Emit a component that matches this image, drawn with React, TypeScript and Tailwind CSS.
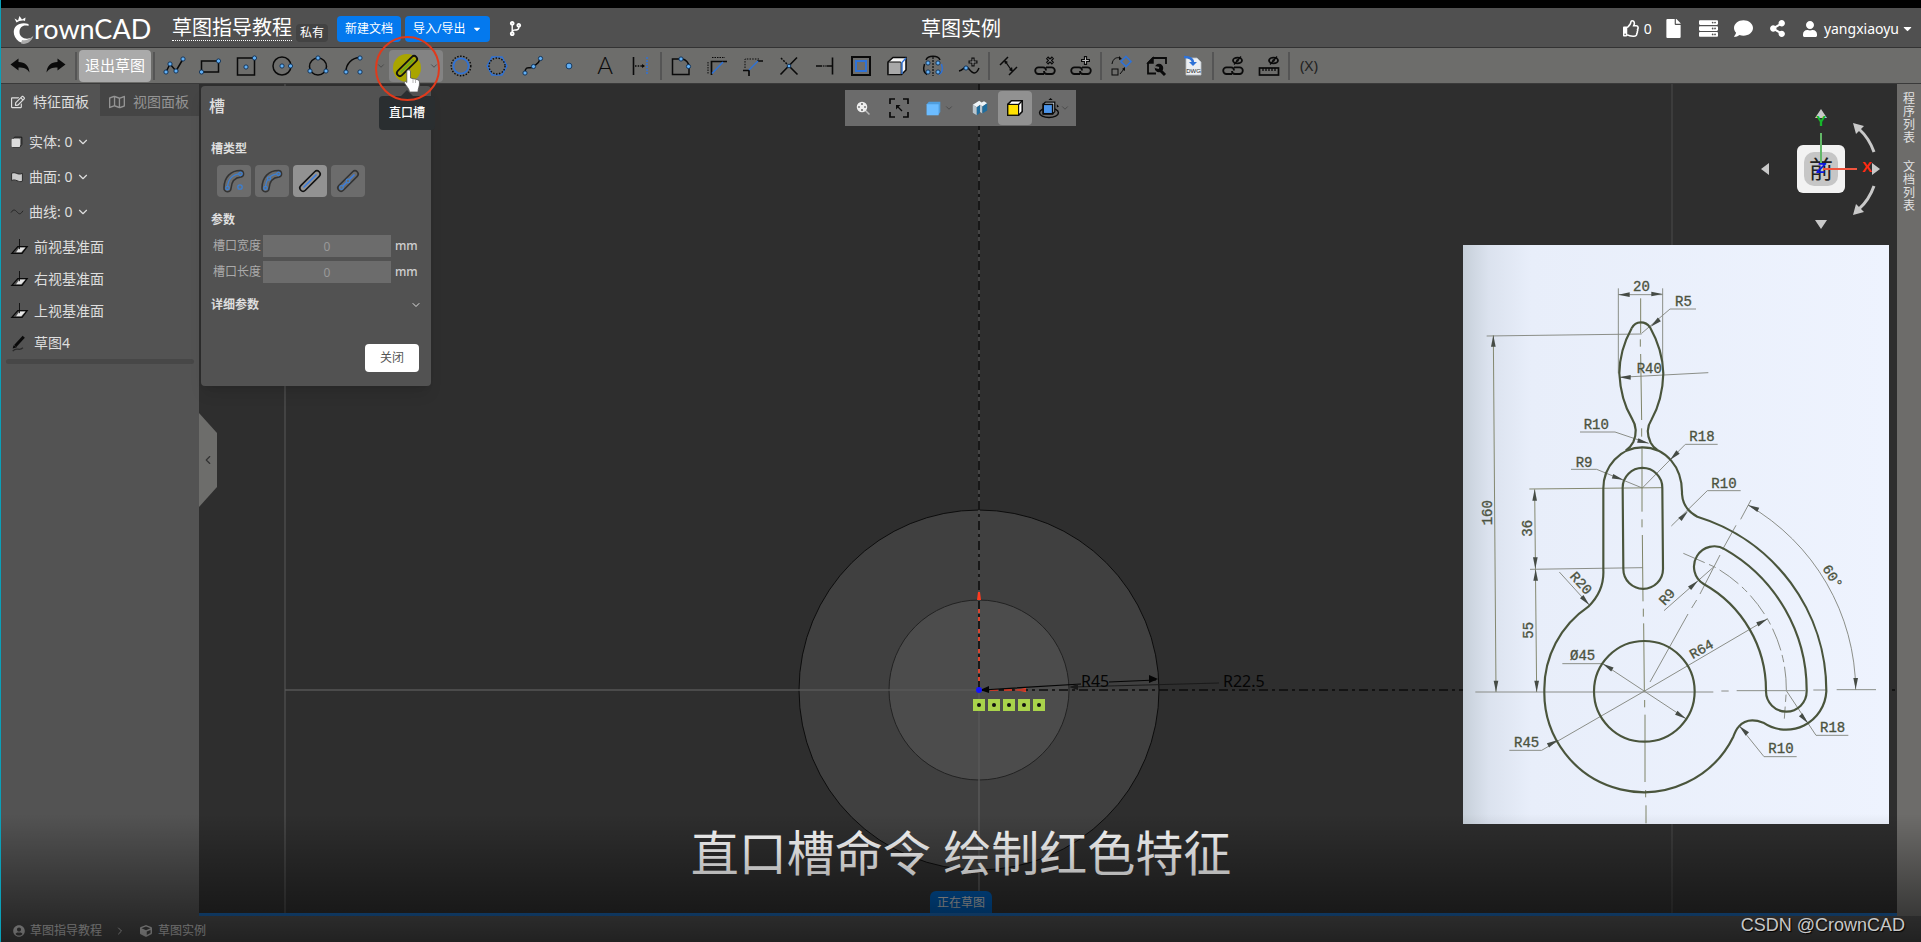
import type { ReactNode } from 'react';
import {
  FaCaretDown,
  FaCodeBranch,
  FaComment,
  FaCube,
  FaFile,
  FaRegEdit,
  FaRegMap,
  FaRegThumbsUp,
  FaServer,
  FaShareAlt,
  FaUser,
  FaUserCircle,
} from 'react-icons/fa';
import { ChevronDown, ChevronLeft, ChevronRight } from 'lucide-react';

const BLUE = '#2f72d6';

function Dot({ x, y, r = 2.1 }: { x: number; y: number; r?: number }) {
  return <circle cx={x} cy={y} r={r} fill="#62b0f5" stroke="#0d2f55" strokeWidth="0.9" />;
}

function Icon({ children, size = 20 }: { children: ReactNode; size?: number }) {
  return (
    <svg width={size} height={size} viewBox="0 0 20 20" fill="none" stroke="#0a0a0a" strokeWidth="1.5" className="shrink-0 overflow-visible" aria-hidden="true">
      {children}
    </svg>
  );
}

function StraightSlot({ dots = false }: { dots?: boolean }) {
  return (
    <>
      <rect x="-3" y="6.8" width="26" height="6.4" rx="3.2" transform="rotate(-45 10 10)" />
      <path d="M3.500 16.500 L16.500 3.500" stroke="#3b7de0" strokeWidth="1.6" />
      {dots && (
        <g fill="#6c6c6c" stroke="#3d7fd0" strokeWidth="1.2">
          <circle cx="3.500" cy="16.500" r="1.8" />
          <circle cx="10" cy="10" r="1.8" />
        </g>
      )}
    </>
  );
}

function ArcSlot({ middle = false }: { middle?: boolean }) {
  return (
    <>
      <path d="M0 17 C0 6 7 -0.500 16.500 -0.500 A3.300 3.300 0 0 1 17 6 C11 6.500 7.500 10 7 17.500 A3.500 3.500 0 0 1 0 17 Z" />
      <path d="M3.500 17 C3.500 8 9 3 16.500 2.800" stroke="#3d7fd0" strokeWidth="1.3" />
      <g fill="#6c6c6c" stroke="#3d7fd0" strokeWidth="1.300">
        <circle cx="3.500" cy="17" r="1.7" />
        <circle cx="16.500" cy="2.800" r="1.7" />
        {middle ? <circle cx="7" cy="7.500" r="1.7" /> : <circle cx="16" cy="16" r="2.200" />}
      </g>
    </>
  );
}

function ChainLinks() {
  return (
    <g strokeWidth="1.8">
      <path d="M9 18 H3.500 a3.300 3.300 0 0 1 0 -6.600 H8 a3 3 0 0 1 3 3" />
      <path d="M11 11.400 H16.500 a3.300 3.300 0 0 1 0 6.600 H12 a3 3 0 0 1 -3 -3" />
    </g>
  );
}

type Tool = { name: string; art: ReactNode };

const drawTools: Tool[] = [
  { name: '直线', art: <><path d="M2 16 L6 8 L12 15 L19 3" /><Dot x={2} y={16} /><Dot x={6} y={8} /><Dot x={12} y={15} /><Dot x={19} y={3} /></> },
  { name: '矩形', art: <><rect x="1.500" y="5" width="17" height="11" /><Dot x={18.500} y={5} /><Dot x={1.500} y={16} /></> },
  { name: '中心矩形', art: <><rect x="1.5" y="2" width="17" height="17" /><Dot x={10} y={11} /><Dot x={18.500} y={2} /></> },
  { name: '圆', art: <><circle cx="10" cy="10" r="9" /><Dot x={10} y={10} /><Dot x={18.500} y={10} /></> },
  { name: '三点圆', art: <><circle cx="10" cy="10.500" r="8.500" /><Dot x={10} y={2} /><Dot x={2} y={15} /><Dot x={18} y={15} /></> },
  { name: '圆弧', art: <><path d="M2 16 A14 14 0 0 1 16 1.500" /><Dot x={2} y={16} /><Dot x={16} y={2} /><Dot x={16} y={16} /></> },
];

const shapeTools: Tool[] = [
  { name: '内切圆', art: <><circle cx="10" cy="10" r="9.800" strokeDasharray="1.500 1.500" strokeWidth="1.400" /><circle cx="10" cy="10" r="7.600" stroke={BLUE} strokeWidth="1.8" /></> },
  { name: '多边形', art: <><path d="M5 1 H15 L19.800 10 L15 19 H5 L0.200 10 Z" stroke={BLUE} strokeWidth="1.6" /><circle cx="10" cy="10" r="8" strokeDasharray="1.500 1.500" strokeWidth="1.400" /></> },
  { name: '样条', art: <><path d="M2 17 C2 8 8 14 10.500 10.500 C13 8 15 9 17.500 2.500" /><Dot x={2} y={17} /><Dot x={10.500} y={10.500} /><Dot x={17.500} y={2.500} /></> },
  { name: '点', art: <Dot x={10} y={10} r={2.900} /> },
  { name: '文字', art: <text x="10" y="18" textAnchor="middle" fontSize="24" fontFamily="Lato" fontWeight="300" fill="#0a0a0a" stroke="none">A</text> },
  { name: '延伸', art: <><path d="M2.500 1 V19" strokeWidth="1.6" /><path d="M4 10 H13" strokeDasharray="1.500 1.200" /><path d="M11 8 L14 10 L11 12 Z" fill="#0a0a0a" stroke="none" /><path d="M16 1 V19" stroke={BLUE} strokeDasharray="2 1" strokeWidth="1.5" /></> },
];

const editTools: Tool[] = [
  { name: '圆角', art: <><path d="M1.500 3 H11 A8 8 0 0 1 18 10.500 V18.500 H1.500 Z" /><Dot x={10} y={3} /><Dot x={17.500} y={10.500} /></> },
  { name: '等距', art: <><path d="M4.500 19 V5.500 H20" strokeWidth="1.700" /><path d="M5 17.500 L16 6" stroke={BLUE} /><path d="M1 6 V18 M5 1.500 H18" strokeDasharray="1.500 1" strokeWidth="1" /></> },
  { name: '倒角', art: <><path d="M0 14.500 H6 V20 M14 5 H20" strokeWidth="1.700" /><path d="M6 14 L15 5" stroke={BLUE} /><path d="M2 12 V3 H16" strokeDasharray="1.500 1.200" strokeWidth="1" /></> },
  { name: '修剪', art: <><path d="M18 1.500 L1.500 18.500 M11 11 L18.500 18.500" strokeWidth="1.600" /><path d="M2 2 L9 9" strokeDasharray="2 1.200" /><Dot x={10} y={10} r={1.800} /></> },
  { name: '延长', art: <><path d="M17.500 1.500 V18.500 M12 10 H17.500 M1 10 H6" strokeWidth="1.600" /><path d="M6 10 H12" strokeDasharray="1.200 1" /></> },
  { name: '偏移', art: <><rect x="1" y="1" width="18" height="18" strokeWidth="2" /><rect x="5" y="5" width="10" height="10" stroke={BLUE} strokeWidth="2" /></> },
  { name: '投影', art: <><path d="M1 6 L6 1.500 H19 V14 L14.500 18.500 H1 Z" fill="#f5f5f5" /><rect x="1.200" y="6" width="13" height="12.500" rx="1" fill="#a8a8a8" strokeWidth="1" /><path d="M15 18 V6.500 L19 2" stroke={BLUE} strokeWidth="1.400" /></> },
  { name: '镜像', art: <><path d="M3 4 C5 -1 15 -1 17 4" /><path d="M10 1 V20" strokeDasharray="2 1" strokeWidth="1.200" /><path d="M1.500 8 C0 13 1 17 4 18.500" /><path d="M18.500 8 C20 13 19 17 16 18.500" stroke={BLUE} /><Dot x={5} y={7} /><Dot x={15} y={7} /><Dot x={5} y={16} /><Dot x={15} y={16} /></> },
  { name: '添加点', art: <><path d="M0 15 C5 14 6 8 10 13 S17 19 20 12" /><path d="M14 1.500 V10.500 M9.500 6 H18.500" strokeWidth="3.200" /><path d="M14 2.700 V9.300 M10.700 6 H17.300" stroke="#999" strokeWidth="1" /><Dot x={7} y={12} /></> },
];

const constraintTools: Tool[] = [
  { name: '约束', art: <><path d="M1 9 L9 1 M10 19 L18 11" /><path d="M6 5 L13 15" strokeWidth="1.300" /><path d="M5 4 L9 6 L6 8 Z M14 16 L13 11 L10 14 Z" fill="#0a0a0a" stroke="none" /></> },
  { name: '删除约束', art: <><ChainLinks /><path d="M12 1.500 L18 7.500 M18 1.500 L12 7.500" strokeWidth="3.200" /><path d="M12.800 2.300 L17.200 6.700 M17.200 2.300 L12.800 6.700" stroke="#aaa" strokeWidth="0.900" /></> },
  { name: '添加约束', art: <><ChainLinks /><path d="M14.500 0 V9 M10 4.500 H19" strokeWidth="3.200" /><path d="M14.500 1.200 V7.800 M11.200 4.500 H17.800" stroke="#bbb" strokeWidth="1.100" /></> },
];

const transferTools: Tool[] = [
  { name: '移动', art: <><rect x="1" y="13" width="6" height="6" strokeWidth="1" /><path d="M1 8 C2 2 6 1 9 2 M9 18 L13 13" strokeWidth="1" /><path d="M8 0 L11 3 L8 4 Z M14 11 L14 15 L11 13 Z" fill="#0a0a0a" stroke="none" /><path d="M15 0.500 L20 5.500 L15 10.500 L10 5.500 Z" stroke={BLUE} strokeWidth="1.600" /></> },
  { name: '块设置', art: <><path d="M9 17.500 H1 V7 L6 2 H19 V8" strokeWidth="1.800" /><path d="M1 7 L6 2 V7 Z" fill="#0a0a0a" /><path d="M18 19 L12 13" strokeWidth="3" /><circle cx="12" cy="12" r="3.500" fill="#0a0a0a" /><path d="M8 11 L12 12" stroke="#6d6d6b" strokeWidth="2" /></> },
  { name: '导入DWG', art: <><path d="M3 2 H14 L18 6 V19 H3 Z" fill="#eceff2" stroke="#b9c0c8" strokeWidth="0.800" /><path d="M1 1 C7 1 10 3 10 7" stroke={BLUE} strokeWidth="2.500" /><path d="M6 6 H14 L10 10 Z" fill={BLUE} stroke="none" /><text x="10.500" y="17" textAnchor="middle" fontSize="6" fontFamily="Liberation Sans" fill="#222" stroke="none">DWG</text></> },
];

const displayTools: Tool[] = [
  { name: '隐藏约束', art: <><ChainLinks /><ellipse cx="14.500" cy="4.500" rx="4.500" ry="2.800" strokeWidth="1.800" /><circle cx="14.500" cy="4.500" r="1.200" fill="#0a0a0a" stroke="none" /><path d="M11 8.500 L18 0.500" strokeWidth="1.300" /></> },
  { name: '隐藏尺寸', art: <><rect x="0.500" y="12" width="19" height="7" strokeWidth="1.700" /><path d="M4 12 V15 M7 12 V15 M10 12 V15 M13 12 V15 M16 12 V15" strokeWidth="1.300" /><ellipse cx="14.500" cy="4.500" rx="4.500" ry="2.800" strokeWidth="1.800" /><circle cx="14.500" cy="4.500" r="1.200" fill="#0a0a0a" stroke="none" /><path d="M11 8.500 L18 0.500" strokeWidth="1.300" /></> },
];

function ToolGroup({ tools }: { tools: Tool[] }) {
  return (
    <>
      {tools.map((tool) => (
        <button key={tool.name} type="button" aria-label={tool.name} className="flex h-8 w-9 shrink-0 items-center justify-center">
          <Icon>{tool.art}</Icon>
        </button>
      ))}
    </>
  );
}

function Divider() {
  return <span className="mx-px h-7 w-0.5 shrink-0 bg-[#555]" />;
}

function Logo() {
  return (
    <a href="#" className="flex w-[130px] items-end text-white" aria-label="CrownCAD">
      <svg width="21" height="30" viewBox="0 0 21 30" className="shrink-0" aria-hidden="true">
        <path d="M3.500 7.500 L1.500 3.500 L5 5.500 L6.500 1 L9 4.500 L12.500 2.500 L12 6 C9 5 6 6 3.500 7.500 Z" fill="#fff" />
        <path d="M15.500 9 C4 6 -2 14 2 22 C6 30 16 29.500 20 22 C13 26 6.500 22.500 6.500 17 C6.500 12.500 10 9.500 15.500 11 Z" fill="#fff" />
        <path d="M9 25 C13 26 17 24 20.500 20.500 C18.500 27 13 30 8 28.500 Z" fill="#aaa" />
      </svg>
      <span className="font-[Lato] text-[27px] leading-8">rownCAD</span>
    </a>
  );
}

function Header() {
  return (
    <header className="grid h-10 grid-cols-[1fr_auto_1fr] items-center border-b border-[#333] bg-[#505050] pt-0.5 text-white">
      <div className="flex items-center pl-3">
        <Logo />
        <h1 className="ml-[29px] border-b border-dotted border-white text-xl leading-6 whitespace-nowrap">草图指导教程</h1>
        <span className="mt-2 ml-1 rounded bg-[#434343] px-1 text-xs leading-[18px] whitespace-nowrap">私有</span>
        <button type="button" className="ml-[9px] h-[26px] rounded-sm bg-[#0479ee] px-2 text-xs whitespace-nowrap">新建文档</button>
        <button type="button" className="ml-1 flex h-[26px] items-center gap-1.5 rounded-sm bg-[#0479ee] px-2 text-xs whitespace-nowrap">
          导入/导出 <FaCaretDown size={10} />
        </button>
        <button type="button" aria-label="分支" className="ml-[18px]"><FaCodeBranch size={15} /></button>
      </div>
      <h2 className="text-xl leading-6">草图实例</h2>
      <div className="flex items-center justify-end pr-[7px]">
        <button type="button" className="flex items-center gap-1 text-sm"><FaRegThumbsUp size={17} />0</button>
        <button type="button" aria-label="文件" className="ml-3"><FaFile size={19} /></button>
        <button type="button" aria-label="列表" className="ml-4"><FaServer size={19} /></button>
        <button type="button" aria-label="消息" className="ml-4"><FaComment size={19} /></button>
        <button type="button" aria-label="分享" className="ml-4"><FaShareAlt size={17} /></button>
        <button type="button" className="ml-4 flex items-center text-sm">
          <FaUser size={16} className="mr-1.5" />yangxiaoyu<FaCaretDown size={13} className="ml-0.5" />
        </button>
      </div>
    </header>
  );
}

function SlotTool() {
  return (
    <div className="relative flex h-8 w-[54px] shrink-0 items-center rounded-sm bg-[#838383]">
      <button type="button" aria-label="直口槽" className="relative flex h-8 w-9 items-center justify-center">
        <span className="absolute top-1 left-1 size-7 rounded-full bg-[#a9a500]" />
        <svg width="20" height="20" viewBox="0 0 20 20" fill="none" stroke="#111" strokeWidth="1.8" className="relative overflow-visible" aria-hidden="true">
          <rect x="-3" y="7" width="26" height="6" rx="3" transform="rotate(-45 10 10)" />
          <path d="M3.500 16.500 L16.500 3.500" stroke="#6aa81c" strokeWidth="2" />
        </svg>
      </button>
      <button type="button" aria-label="更多槽" className="flex w-[18px] justify-center text-[#444]"><ChevronDown size={10} /></button>

      {/* Hover tooltip */}
      <span className="absolute top-10 left-3 z-20 border-x-6 border-b-6 border-x-transparent border-b-[#2a2e30]" />
      <span role="tooltip" className="absolute top-[46px] -left-2.5 z-20 rounded bg-[#2a2e30] px-2.5 py-2 text-xs leading-[18px] font-medium whitespace-nowrap text-white">
        直口槽
      </span>

      {/* Click marker and pointer */}
      <span className="absolute -top-3.5 -left-3.5 z-30 size-[65px] rounded-full border-2 border-[#e03a1c]" />
      <svg width="18" height="24" viewBox="0 0 18 24" className="absolute top-[19px] left-3.5 z-30" aria-hidden="true">
        <path d="M5 1 C6.800 0.500 7.500 1.500 7.500 3 V9 L14 10.500 C16 11 16.500 12 16.500 14 C16.500 18 15 19 15 23 H6.500 C6 19 3 17 1.500 14 C1 12.500 2.500 12 3.800 13.500 V3 C3.800 2 4 1.300 5 1 Z" fill="#fff" stroke="#555" strokeWidth="0.800" />
        <path d="M10 10 V14 M12.500 11 V14" stroke="#999" strokeWidth="0.700" />
      </svg>
    </div>
  );
}

function HistoryArrow({ flip = false }: { flip?: boolean }) {
  return (
    <svg width="20" height="16" viewBox="0 0 20 16" className={flip ? '-scale-x-100' : ''} aria-hidden="true">
      <path d="M0.500 6.500 L8.500 0.500 V4 C15 4 19 8 19.500 14.500 C17 10.500 14 9.500 8.500 9.500 V12.500 Z" fill="#0a0a0a" />
    </svg>
  );
}

function Toolbar() {
  return (
    <div role="toolbar" className="flex h-9 items-center border-b border-[#3a3a3a] bg-[#6d6d6b] pl-px text-[#0a0a0a]">
      <button type="button" aria-label="撤销" className="flex h-8 w-9 shrink-0 items-center justify-center"><HistoryArrow /></button>
      <button type="button" aria-label="重做" className="flex h-8 w-9 shrink-0 items-center justify-center"><HistoryArrow flip /></button>
      <Divider />
      <button type="button" className="mx-px h-8 w-[72px] shrink-0 rounded-sm bg-[#aaa] text-[15px] text-white">退出草图</button>
      <Divider />
      <ToolGroup tools={drawTools} />
      <button type="button" aria-label="更多圆弧" className="flex w-[17px] justify-center text-[#444]"><ChevronDown size={10} /></button>
      <SlotTool />
      <ToolGroup tools={shapeTools} />
      <Divider />
      <ToolGroup tools={editTools} />
      <Divider />
      <ToolGroup tools={constraintTools} />
      <Divider />
      <ToolGroup tools={transferTools} />
      <Divider />
      <ToolGroup tools={displayTools} />
      <Divider />
      <button type="button" className="h-8 w-9 shrink-0 text-[15px] text-[#222]">(X)</button>
    </div>
  );
}

const counts = [
  { label: '实体', art: <><path d="M3 5 L6 2 H18 V14 L15 18 H3 Z" fill="#777" strokeWidth="1.500" /><rect x="1" y="4.500" width="14" height="14" rx="2" fill="#ddd" stroke="none" /></> },
  { label: '曲面', art: <path d="M1 4 C7 0 11 8 19 4 V17 C12 20 8 12 1 16 Z" fill="#ccc" stroke="#222" /> },
  { label: '曲线', art: <path d="M0 11 C5 3 8 8 11 11 S16 14 20 8" stroke="#222" /> },
];

const planes = ['前视基准面', '右视基准面', '上视基准面'];

function FeaturePanel() {
  return (
    <aside className="w-[198px] shrink-0 bg-[#535353] text-sm text-[#dedede]">
      <div role="tablist" className="flex h-8">
        <button type="button" role="tab" aria-selected="true" className="flex w-[99px] items-center gap-2 pt-1 pl-2.5 whitespace-nowrap">
          <FaRegEdit size={14} />特征面板
        </button>
        <button type="button" role="tab" aria-selected="false" className="flex flex-1 items-center gap-2 bg-[#454545] pt-1 pl-[9px] whitespace-nowrap text-[#949494]">
          <FaRegMap size={16} />视图面板
        </button>
      </div>
      <ul className="mt-2">
        {counts.map((item) => (
          <li key={item.label} className="flex h-[35px] items-center pl-2.5">
            <Icon size={12}>{item.art}</Icon>
            <button type="button" className="ml-1.5 flex items-center gap-1">
              {item.label}: 0 <ChevronDown size={14} />
            </button>
          </li>
        ))}
      </ul>
      <ul className="mt-0.5">
        {planes.map((plane) => (
          <li key={plane} className="flex h-8 items-center gap-1.5 pl-2.5">
            <Icon size={17}>
              <path d="M1 17 L8 9 H19 L13 17 Z" strokeWidth="1.500" />
              <path d="M6 15.500 L10 10 H17 L12 15.500 Z" fill="#e5e5e5" stroke="none" />
              <path d="M10 0 V12" strokeWidth="1" />
            </Icon>
            {plane}
          </li>
        ))}
        <li className="flex h-8 items-center gap-1.5 pl-2.5">
          <Icon size={17}>
            <path d="M5 13 L15 2" strokeWidth="3.500" />
            <path d="M2 16 L3 12 L7 14.500 Z" fill="#0a0a0a" stroke="none" />
            <path d="M2 19 C7 13 9 20 14 15" stroke="#2a2a2a" />
          </Icon>
          草图4
        </li>
      </ul>
      <div className="mx-[5px] h-[5px] rounded-sm bg-[#474747]" />
    </aside>
  );
}

const slotTypes = [
  { name: '圆心弧槽', art: <ArcSlot /> },
  { name: '三点弧槽', art: <ArcSlot middle /> },
  { name: '直口槽', art: <StraightSlot />, active: true },
  { name: '中心直口槽', art: <StraightSlot dots /> },
];

const slotParams = [
  { id: 'slot-width', label: '槽口宽度' },
  { id: 'slot-length', label: '槽口长度' },
];

function SlotPanel() {
  return (
    <section className="absolute top-0.5 left-0.5 w-[230px] rounded bg-[#525252] px-2.5 pt-2.5 pb-3.5 text-xs text-[#dedede] shadow-lg">
      <h3 className="-ml-0.5 text-base leading-5 font-medium">槽</h3>
      <h4 className="mt-[23px] leading-5 font-bold">槽类型</h4>
      <div className="mt-1.5 flex gap-1 pl-1.5">
        {slotTypes.map((type) => (
          <button
            key={type.name}
            type="button"
            aria-label={type.name}
            className={`flex h-8 w-[34px] items-center justify-center rounded-sm ${type.active ? 'bg-[#929292]' : 'bg-[#6c6c6c]'}`}
          >
            <svg width="22" height="22" viewBox="-1 -1 22 22" fill="none" stroke={type.active ? '#111' : '#333'} strokeWidth="1.600" className="overflow-visible" aria-hidden="true">
              {type.art}
            </svg>
          </button>
        ))}
      </div>
      <h4 className="mt-[13px] leading-5 font-bold">参数</h4>
      <div className="mt-[5px] flex flex-col gap-1">
        {slotParams.map((param) => (
          <div key={param.id} className="flex h-[22px] items-center pl-0.5">
            <label htmlFor={param.id} className="w-[50px] text-[#aaa]">{param.label}</label>
            <input id={param.id} type="text" defaultValue="0" disabled className="h-[22px] w-32 bg-[#6c6c6c] text-center text-[#999]" />
            <span className="ml-1 text-xs font-medium text-[#d0d0d0]">mm</span>
          </div>
        ))}
      </div>
      <button type="button" className="mt-3 flex w-full items-center justify-between leading-5 font-bold">
        详细参数 <ChevronDown size={12} className="-mr-px" />
      </button>
      <div className="mt-[29px] flex justify-end pr-0.5">
        <button type="button" className="h-7 w-[54px] rounded-sm bg-white text-[#555]">关闭</button>
      </div>
    </section>
  );
}

function ViewBar() {
  return (
    <div role="toolbar" className="absolute top-1.5 left-[646px] flex h-9 items-center bg-[#6b6b6b]">
      <button type="button" aria-label="缩放" className="flex w-9 justify-center">
        <Icon size={15}>
          <path d="M12 12 L18 18" stroke="#bbb" strokeWidth="2" />
          <circle cx="8" cy="8" r="7" fill="#eee" stroke="none" />
          <path d="M8 3 V5 M8 11 V13 M3 8 H5 M11 8 H13" strokeWidth="1.600" />
        </Icon>
      </button>
      <button type="button" aria-label="适合窗口" className="flex w-9 justify-center">
        <Icon>
          <path d="M1 6 V1 H6 M14 1 H19 V6 M19 14 V19 H14 M6 19 H1 V14" strokeWidth="1.700" />
          <path d="M9 9 L13 13" strokeWidth="1.200" />
          <path d="M7 7 H11.500 L7 11.500 Z" fill="#0a0a0a" stroke="none" />
        </Icon>
      </button>
      <button type="button" aria-label="显示样式" className="flex w-[45px] items-center justify-center gap-0.5 text-[#444]">
        <Icon size={17}><path d="M2 5 L4.500 2 H18 V14 L16 17 H2 Z" fill="#4f9ddd" stroke="none" /><rect x="2" y="5" width="14" height="13" fill="#6cbcff" stroke="none" /></Icon>
        <ChevronDown size={10} />
      </button>
      <button type="button" aria-label="剖视" className="flex w-9 justify-center">
        <Icon size={16}>
          <path d="M1 6 L9 1 L12 3 L15 1.500 L19 4 L13 8 L10 6 L6 9 Z" fill="#eef4f8" stroke="none" />
          <path d="M1 6 L6 9 V19 L1 16 Z M10 6 L13 8 V17 L10 15 Z" fill="#b9c6cf" stroke="none" />
          <path d="M6 9 L10 6.500 V16 L6 19 Z M13 8 L19 4 V13 L13 17 Z" fill="#1f6d9e" stroke="none" />
        </Icon>
      </button>
      <button type="button" aria-label="正视" className="flex h-[34px] w-[34px] items-center justify-center rounded-sm bg-[#919191]">
        <Icon size={18}><path d="M2 6 L6 2 H18 V14 L14 18 H2 Z" fill="#fff" strokeWidth="1.700" /><path d="M14 6 L18 2" /><rect x="2" y="6" width="12" height="12" fill="#ffe100" strokeWidth="1.300" /></Icon>
      </button>
      <button type="button" aria-label="旋转" className="flex w-11 items-center justify-center text-[#444]">
        <Icon size={21}><ellipse cx="9.500" cy="14" rx="9" ry="4.500" strokeWidth="1.400" /><path d="M4 6 L6 4 H15 V13 L13 15 H4 Z" fill="#dfefff" strokeWidth="1.200" /><rect x="4" y="6" width="9" height="9" fill="#4b94ea" /><path d="M9 2 L11 0 L13 2 Z M17 6 L19 8 L17 9 Z" fill="#0a0a0a" stroke="none" /></Icon>
        <ChevronDown size={10} />
      </button>
    </div>
  );
}

/* Sketch geometry, centred on the origin point at 979,690 */
function SketchCanvas() {
  return (
    <svg className="absolute inset-0 h-full w-full" viewBox="199 84 1698 829" preserveAspectRatio="xMidYMid slice" fill="none">
      <circle cx="979" cy="690" r="180" fill="#404040" stroke="#0c0c0c" />
      <circle cx="979" cy="690" r="90" fill="#4c4c4c" stroke="#222" />
      <path d="M285 84 V913" stroke="#434343" strokeWidth="2" />
      <path d="M1672 84 V913" stroke="#4a4a4a" />
      <path d="M285 690 H979 M979 690 V913" stroke="#585858" strokeWidth="2" opacity="0.700" />
      <path d="M979 84 V690" stroke="#4a4a4a" strokeWidth="2" opacity="0.800" />
      <path d="M979 690 V84 M979 690 H1897" stroke="#0d0d0d" strokeWidth="1.600" strokeDasharray="9 4 3 4" />
      <path d="M979 681 V609" stroke="#d8452f" strokeWidth="2" strokeDasharray="4 4 4 8" />
      <path d="M977 600 L978 592 H980 L981 600 Z M1014 690 L1026 688 V692 Z" fill="#ff3b1f" />
      <path d="M990 690 H1032" stroke="#c23a28" strokeWidth="2" strokeDasharray="8 6" />
      <path d="M982 690 L1081 684 M1109 682 L1156 680" stroke="#050505" strokeWidth="1.200" />
      <path d="M980 690 L989 686 V693 Z M1158 679 L1149 675 V683 Z" fill="#050505" />
      <path d="M1072 687 L1219 683" stroke="#1a1a1a" strokeWidth="1.200" />
      <path d="M1069 687 L1078 684 V690 Z" fill="#1a1a1a" />
      <g fill="#050505" fontFamily="Noto Sans" fontSize="16">
        <text x="1081" y="687">R45</text>
        <text x="1223" y="687">R22.5</text>
      </g>
      <circle cx="979" cy="690" r="3" fill="#1414ff" />
      {[973, 988, 1003, 1018, 1033].map((x) => (
        <g key={x}>
          <rect x={x} y="699" width="12" height="12" fill="#a9d34b" />
          <circle cx={x + 6} cy="705" r="2" fill="#111" />
        </g>
      ))}
    </svg>
  );
}

const drawingLabels = [
  { x: 519, y: 154, text: '20' },
  { x: 645, y: 198, text: 'R5' },
  { x: 530, y: 398, text: 'R40' },
  { x: 371, y: 568, text: 'R10' },
  { x: 688, y: 604, text: 'R18' },
  { x: 347, y: 680, text: 'R9' },
  { x: 754, y: 743, text: 'R10' },
  { x: 330, y: 1261, text: 'Ø45' },
  { x: 162, y: 1522, text: 'R45' },
  { x: 1080, y: 1476, text: 'R18' },
  { x: 925, y: 1540, text: 'R10' },
  { x: 96, y: 856, text: '160', turn: -90 },
  { x: 216, y: 890, text: '36', turn: -90 },
  { x: 218, y: 1196, text: '55', turn: -90 },
  { x: 328, y: 1010, text: 'R20', turn: 48 },
  { x: 614, y: 1098, text: 'R9', turn: -48 },
  { x: 698, y: 1258, text: 'R64', turn: -30 },
  { x: 1086, y: 985, text: '60°', turn: 58 },
];

// tip x, tip y, direction the head points to (degrees, 0 = right)
const arrowHeads = [
  [475, 164, 180], [608, 162, 0], [572, 260, 140], [478, 412, 180], [100, 286, -90], [108, 1356, 90],
  [566, 610, 15], [630, 660, 135], [490, 719, 18], [224, 748, -90], [226, 986, 90], [227, 988, -90],
  [230, 1356, 90], [684, 814, -45], [864, 795, 205], [388, 1095, 48], [714, 1022, -42], [922, 1137, -28],
  [428, 1271, 211], [678, 1436, 31], [294, 1500, -28], [1044, 1450, 50], [838, 1458, 225], [1187, 1348, 90],
];

/* Reference part drawing pinned to the right of the canvas */
function PartDrawing() {
  return (
    <svg className="absolute top-[161px] right-2 w-[426px]" viewBox="9 15 1278 1737" fill="none" role="img" aria-label="零件图">
      <defs>
        <linearGradient id="paper">
          <stop offset="0" stopColor="#c6cfd9" />
          <stop offset="0.06" stopColor="#dbe2ee" />
          <stop offset="0.16" stopColor="#e8eefa" />
          <stop offset="1" stopColor="#eef3fe" />
        </linearGradient>
      </defs>
      <rect x="9" y="15" width="1278" height="1737" fill="url(#paper)" />

      {/* Dimension and leader lines */}
      <g stroke="#83867f" strokeWidth="2.800">
        <path d="M475 145 V400 M608 145 V400 M475 164 H608" />
        <path d="M708 207 H630 L545 280 M80 288 L545 282 M478 412 L745 398" />
        <path d="M360 576 H465 L566 610 M773 613 H676 L547 744 L410 688 H333" />
        <path d="M208 747 L606 743 M224 748 L230 1356 M100 286 L108 1356" stroke="#7d8166" />
        <path d="M842 752 H742 L634 858 M210 988 L548 983" />
        <path d="M298 996 L388 1095 M612 1112 L762 980 M552 1354 L922 1137" />
        <path d="M307 1271 H428 L678 1436 M148 1531 H245 L552 1354" />
        <path d="M979 1352 L1068 1486 H1165 M838 1458 L912 1550 H1010" />
        <path d="M864 795 A645 645 0 0 1 1187 1350" />
        <path d="M46 1356 H760 M784 1353 H806 M830 1352 H1036 M1060 1350 H1098 M1130 1349 H1248" />
        <path d="M873 780 L842 838 M828 856 L788 928 M780 945 L720 1062 M710 1080 L695 1104 M684 1122 L570 1326" />
        <path d="M670 940 L762 980 A420 420 0 0 1 979 1352 L973 1436" strokeDasharray="70 14 22 14" />
        <path d="M542 175 V280 M541 298 V320 M542 342 L545 540 M545 565 V590 M546 620 V815 M546 838 V862 M547 885 L549 1084 M550 1106 V1130 M551 1150 L553 1354 M554 1380 V1402 M555 1424 V1626 M557 1650 V1672 M558 1696 V1750" stroke="#7f8468" strokeWidth="3" />
      </g>

      {/* Part outline */}
      <g stroke="#4a553c" strokeWidth="6.500">
        <path d="M515 265 Q524 247 542 247 Q560 247 570 262 Q608 330 610 400 Q608 480 574 540 Q554 570 572 608 Q580 622 592 630" />
        <path d="M515 265 Q479 330 478 400 Q482 480 516 536 Q536 568 520 606 Q512 622 497 632" />
        <path d="M430 990 V745 C430 680 480 622 547 622 C616 622 668 680 666 762 C668 792 685 816 712 830 A547 547 0 0 1 1099 1354 A121 121 0 0 1 910 1448 Q862 1430 836 1460 Q828 1468 820 1490 A299 299 0 0 1 253 1352 A299 299 0 0 1 385 1100 C420 1066 432 1030 430 990 Z" />
        <path d="M488 743 A59 59 0 0 1 607 743 L609 987 A59 59 0 0 1 490 987 Z" />
        <circle cx="553" cy="1354" r="151" />
        <path d="M731 1032 A365 365 0 0 1 918 1354 A61 61 0 0 0 1040 1354 A487 487 0 0 0 795 928 A60 60 0 0 0 731 1032 Z" />
      </g>

      {arrowHeads.map(([x, y, angle]) => (
        <path key={`${x}-${y}`} d="M0 0 L-34 -7 V7 Z" transform={`translate(${x} ${y}) rotate(${angle})`} fill="#454b45" />
      ))}
      <g fill="#4c5340" stroke="#4c5340" strokeWidth="1" fontFamily="Liberation Mono" fontSize="42">
        {drawingLabels.map((label) => (
          <text key={`${label.x}-${label.y}`} transform={`translate(${label.x} ${label.y}) rotate(${label.turn ?? 0})`}>
            {label.text}
          </text>
        ))}
      </g>
    </svg>
  );
}

function ViewCube() {
  return (
    <svg className="absolute top-6 right-3.5 h-[124px] w-[124px]" viewBox="1759 108 124 124" fill="none" role="img" aria-label="前视图">
      <rect x="1797" y="145" width="48" height="48" rx="6" fill="#f2f2f2" />
      <rect x="1804" y="152" width="34" height="34" rx="10" fill="#c6c6c6" />
      <text x="1821" y="178" textAnchor="middle" fontSize="24" fontFamily="Noto Sans CJK SC" fill="#222">前</text>
      <path d="M1821 133 V163" stroke="#63b768" strokeWidth="2" />
      <path d="M1823 169 H1857" stroke="#f0553f" strokeWidth="2" />
      <g fill="#c9c9c9">
        <path d="M1821 109 L1827 118 H1815 Z M1821 229 L1827 220 H1815 Z M1761 169 L1769 163 V175 Z M1880 169 L1872 163 V175 Z" />
        <path d="M1853 123 L1864 126 L1856 134 Z M1853 215 L1864 212 L1856 204 Z" />
      </g>
      <path d="M1859 129 Q1869 138 1874 152 M1859 209 Q1869 200 1874 186" stroke="#c9c9c9" strokeWidth="3" />
      <g fontFamily="Liberation Sans" fontWeight="700" textAnchor="middle" fontSize="15">
        <text x="1821" y="126" fill="#14b82a">Y</text>
        <text x="1867" y="172" fill="#ff2a10">X</text>
        <text x="1821" y="173" fill="#0a18e0" fontStyle="italic">Z</text>
      </g>
    </svg>
  );
}

const sideTabs = ['程序列表', '文档列表'];

export default function App() {
  return (
    <div className="relative flex min-h-screen flex-col overflow-hidden border-l border-[#0aa0b8] bg-[#2c2c2c] font-['Noto_Sans','Noto_Sans_CJK_SC',sans-serif]">
      <div className="h-2 bg-black" />
      <Header />
      <Toolbar />

      <div className="flex flex-1">
        <FeaturePanel />
        <main className="relative flex-1 border-b-3 border-[#1c66b0] bg-[#2e2e2e]">
          <SketchCanvas />
          <PartDrawing />
          <ViewCube />
          <ViewBar />
          <SlotPanel />
          <button
            type="button"
            aria-label="收起面板"
            className="absolute top-[329px] left-0 flex h-[94px] w-[18px] items-center justify-center bg-[#6d6d6b] text-[#333] [clip-path:polygon(0_0,100%_20px,100%_74px,0_94px)]"
          >
            <ChevronLeft size={14} />
          </button>
          <span className="absolute bottom-0 left-[731px] rounded-t-md bg-[#0056a8] px-[7px] pt-0.5 text-xs leading-5 text-[#bbb]">正在草图</span>
        </main>
        <nav className="flex w-6 shrink-0 flex-col items-center gap-4 bg-[#6d6c6a] pt-2 text-xs leading-[13px] text-[#e2e2e2]">
          {sideTabs.map((tab) => (
            <button key={tab} type="button" className="w-3 break-all">{tab}</button>
          ))}
        </nav>
      </div>

      <footer className="flex h-[26px] items-center bg-[#535353] pt-1 pl-3 text-xs text-[#e2e2e2]">
        <FaUserCircle size={12} className="mr-[5px]" />
        草图指导教程
        <ChevronRight size={12} className="mx-3" />
        <FaCube size={12} className="mr-1.5 ml-0.5" />
        草图实例
      </footer>

      {/* Video caption and bottom shade */}
      <p className="pointer-events-none absolute inset-x-0 bottom-[57px] text-center text-5xl leading-[64px] text-white">直口槽命令 绘制红色特征</p>
      <div className="pointer-events-none absolute inset-x-0 bottom-0 h-32 bg-linear-to-b from-transparent to-black/60" />
      <p className="pointer-events-none absolute right-4 bottom-[5px] font-['Liberation_Sans'] text-lg leading-6 text-[#c8c8c8] [text-shadow:1px_1px_1px_#000]">CSDN @CrownCAD</p>
    </div>
  );
}
